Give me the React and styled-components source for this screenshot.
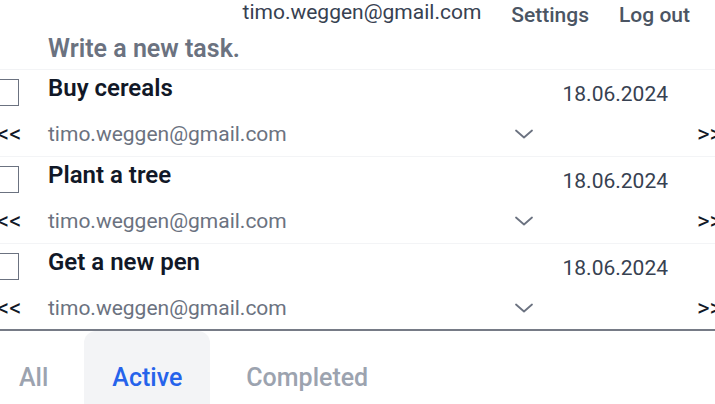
import React from "react";
import styled, { createGlobalStyle } from "styled-components";

const GlobalStyle = createGlobalStyle`
  html, body {
    margin: 0;
    padding: 0;
    background: #ffffff;
    overflow: hidden;
    font-family: Roboto, "Noto Sans", sans-serif;
  }
`;

const Page = styled.div`
  width: 715px;
  height: 404px;
  overflow: hidden;
`;

const Header = styled.header`
  height: 28px;
  display: flex;
  justify-content: flex-end;
  align-items: flex-start;
  gap: 30px;
  padding-right: 25px;
`;

const UserEmail = styled.span`
  font-size: 21px;
  line-height: 24px;
  color: #374151;
`;

const HeaderLink = styled.a`
  font-size: 21px;
  line-height: 24px;
  padding-top: 3px;
  font-weight: 500;
  color: #4b5563;
  text-decoration: none;
`;

const NewTask = styled.div`
  height: 41px;
  display: flex;
  align-items: center;
  padding-left: 48px;
  border-bottom: 1px solid #f3f4f6;
  font-size: 25px;
  font-weight: 600;
  color: #6b7280;
`;

const List = styled.ul`
  list-style: none;
  margin: 0;
  padding: 0;
  border-bottom: 2px solid #767b86;
`;

const Row = styled.li`
  padding: 6px 0 10px;
  border-bottom: 1px solid #f3f4f6;
  &:last-child {
    border-bottom: none;
    padding-bottom: 9px;
  }
`;

const TopLine = styled.div`
  height: 46px;
  display: flex;
  align-items: flex-start;
  padding-right: 47px;
`;

const Checkbox = styled.span`
  width: 25px;
  height: 25px;
  margin: 3px 0 0 -8px;
  border: 1.5px solid #6b7280;
  flex: none;
`;

const Title = styled.span`
  margin-left: 29px;
  flex: 1;
  font-size: 24px;
  line-height: 24px;
  font-weight: 600;
  color: #111827;
`;

const DateText = styled.span`
  margin-top: 6px;
  font-size: 21px;
  line-height: 24px;
  color: #374151;
`;

const BottomLine = styled.div`
  height: 24px;
  display: flex;
  align-items: center;
`;

const Arrow = styled.span`
  font-size: 24px;
  line-height: 24px;
  color: #111827;
  flex: none;
  width: ${(p) => p.$width}px;
  margin-left: ${(p) => p.$offset || 0}px;
  white-space: nowrap;
`;

const Select = styled.div`
  width: 486px;
  flex: none;
  display: flex;
  align-items: center;
  justify-content: space-between;
  font-size: 21px;
  line-height: 24px;
  color: #6b7280;
`;

const Tabs = styled.nav`
  display: flex;
  gap: 8px;
  margin-left: -9px;
`;

const Tab = styled.button`
  border: none;
  font-family: inherit;
  padding: 32px 28px 28px;
  font-size: 25px;
  line-height: 30px;
  font-weight: 500;
  border-radius: 12px 12px 0 0;
  background: ${(p) => (p.$active ? "#f3f4f6" : "transparent")};
  color: ${(p) => (p.$active ? "#2563eb" : "#9ca3af")};
`;

const Chevron = () => (
  <svg width="20" height="10" viewBox="0 0 20 10" fill="none">
    <path d="M2 1.5l8 7 8-7" stroke="#6b7280" strokeWidth="1.8" strokeLinecap="round" strokeLinejoin="round" />
  </svg>
);

const tasks = [
  { id: 1, title: "Buy cereals", date: "18.06.2024" },
  { id: 2, title: "Plant a tree", date: "18.06.2024" },
  { id: 3, title: "Get a new pen", date: "18.06.2024" },
];

const user = "timo.weggen@gmail.com";

function App() {
  return (
    <Page>
      <GlobalStyle />
      <Header>
        <UserEmail>{user}</UserEmail>
        <HeaderLink>Settings</HeaderLink>
        <HeaderLink>Log out</HeaderLink>
      </Header>
      <NewTask>Write a new task.</NewTask>
      <List>
        {tasks.map((task) => (
          <Row key={task.id}>
            <TopLine>
              <Checkbox />
              <Title>{task.title}</Title>
              <DateText>{task.date}</DateText>
            </TopLine>
            <BottomLine>
              <Arrow $width={51} $offset={-3}>{"<<"}</Arrow>
              <Select>
                <span>{user}</span>
                <Chevron />
              </Select>
              <Arrow $width={30} $offset={163}>{">>"}</Arrow>
            </BottomLine>
          </Row>
        ))}
      </List>
      <Tabs>
        <Tab>All</Tab>
        <Tab $active>Active</Tab>
        <Tab>Completed</Tab>
      </Tabs>
    </Page>
  );
}

export default App;
